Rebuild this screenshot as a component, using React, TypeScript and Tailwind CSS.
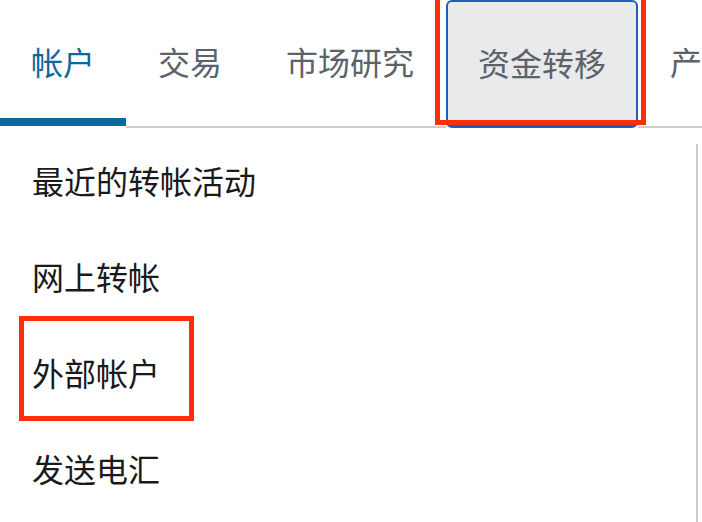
const tabs = ["交易", "市场研究"];

const menu = ["最近的转帐活动", "网上转帐", "外部帐户", "发送电汇"];

export default function App() {
  return (
    <div className="relative h-[522px] w-[702px] overflow-hidden bg-white font-['Noto_Sans_CJK_SC',sans-serif]">
      <nav className="flex h-[128px] items-start whitespace-nowrap text-[32px] leading-none">
        <div className="flex h-[126px] shrink-0 items-center border-b-[8px] border-[#0d6a97] px-[31px] pt-[4px] text-[#0d6a97]">
          帐户
        </div>
        {tabs.map((t) => (
          <div
            key={t}
            className="flex h-[128px] shrink-0 items-center border-b-2 border-[#cdcdcd] px-[32px] pb-[4px] text-[#5c6269]"
          >
            {t}
          </div>
        ))}
        <div className="relative flex h-[128px] shrink-0 items-center rounded-[6px] border-2 border-b-[3px] border-[#1d5fbf] bg-[#e9eaec] px-[30px] pb-[3px] text-[#5c6269]">
          资金转移
          <div className="absolute left-[-13px] top-[-8px] h-[131px] w-[211px] border-[5px] border-[#ff2d0a]" />
        </div>
        <div className="flex h-[128px] flex-1 shrink-0 items-center border-b-2 border-[#cdcdcd] pb-[4px] pl-[32px] text-[#5c6269]">
          产
        </div>
      </nav>
      <div className="flex h-[394px]">
        <ul className="flex-1 pt-[4px] text-[32px] leading-none text-[#1a1a1a]">
          {menu.map((m) => (
            <li key={m} className="relative flex h-[96px] items-center whitespace-nowrap pl-[32px]">
              {m}
              {m === "外部帐户" && (
                <div className="absolute left-[19px] top-[-8px] h-[105px] w-[175px] border-[5px] border-[#ff2d0a]" />
              )}
            </li>
          ))}
        </ul>
        <div className="mr-[4px] mt-[16px] w-[2px] bg-[#cccccc]" />
      </div>
    </div>
  );
}
